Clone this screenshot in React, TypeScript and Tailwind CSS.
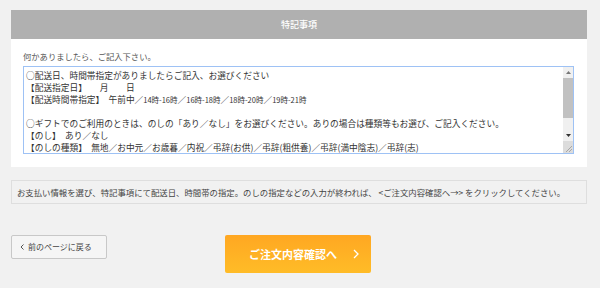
import React from 'react';

const lines: React.ReactNode[] = [
    '○配送日、時間帯指定がありましたらご記入、お選びください',
    '【配送指定日】　　月　　日',
    <>
        【配送時間帯指定】　午前中／<span className="text-[7.5px]">14時-16時</span>／<span className="text-[7.5px]">16時-18時</span>／<span className="text-[7.5px]">18時-20時</span>／<span className="text-[7.5px]">19時-21時</span>
    </>,
    '',
    '○ギフトでのご利用のときは、のしの「あり／なし」をお選びください。ありの場合は種類等もお選び、ご記入ください。',
    '【のし】　あり／なし',
    '【のしの種類】　無地／お中元／お歳暮／内祝／弔辞(お供)／弔辞(粗供養)／弔辞(満中陰志)／弔辞(志)',
    '【名入れ】　ありの場合は名前をご記入ください。【　　　　　】',
];

const font = { fontFamily: '"Noto Sans CJK JP", "Noto Sans", sans-serif' };

const App: React.FC = () => {
    return (
        <div className="w-[600px] h-[288px] bg-[#f1f1f1] pt-[10px] pl-[11px] pr-[13px] text-[#444]" style={font}>
            {/* 特記事項 panel */}
            <div className="bg-white">
                <div className="h-[29px] bg-[#b0b0b0] flex items-center justify-center text-white text-[9px] font-medium">
                    特記事項
                </div>
                <div className="pt-[10px] pb-[13px] pl-[12px] pr-[13px]">
                    <p className="text-[8.3px] leading-[14px] mb-[3px] text-[#555]">何かありましたら、ご記入下さい。</p>
                    <div className="h-[88px] border border-[#9ec2f5] flex overflow-hidden">
                        <div className="flex-1 pl-[2px] pt-[3px] text-[8.7px] leading-[12px] text-[#333] overflow-hidden whitespace-nowrap">
                            {lines.map((line, i) => (
                                <div key={i} className="h-[12px]">{line}</div>
                            ))}
                        </div>
                        <div className="w-[10px] bg-[#f0f0f0] flex flex-col">
                            <div className="h-[11px] flex items-center justify-center text-[#777]">
                                <svg width="5" height="3" viewBox="0 0 5 3"><path d="M0 3 L2.5 0 L5 3 Z" fill="currentColor" /></svg>
                            </div>
                            <div className="h-[40px] bg-[#c1c1c1]" />
                            <div className="flex-1" />
                            <div className="h-[11px] flex items-center justify-center text-[#333]">
                                <svg width="5" height="3" viewBox="0 0 5 3"><path d="M0 0 L5 0 L2.5 3 Z" fill="currentColor" /></svg>
                            </div>
                            <div className="h-[12px] bg-[#dcdcdc] flex items-end justify-end p-[1px]">
                                <svg width="7" height="7" viewBox="0 0 7 7">
                                    <path d="M7 1 L1 7 M7 4 L4 7" stroke="#999" strokeWidth="0.8" />
                                </svg>
                            </div>
                        </div>
                    </div>
                </div>
            </div>

            {/* info */}
            <div className="mt-[13px] h-[24px] border border-[#dedede] flex items-center pl-[5px] text-[8.4px] text-[#444]">
                お支払い情報を選び、特記事項にて配送日、時間帯の指定。のしの指定などの入力が終われば、 &lt;ご注文内容確認へ→&gt; をクリックしてください。
            </div>

            {/* buttons */}
            <div className="mt-[31px] flex items-start">
                <button className="w-[96px] h-[24px] bg-[#f5f5f5] border border-[#c8c8c8] rounded-[2px] flex items-center pl-[8px] gap-[4px] text-[8px] text-[#444]">
                    <svg width="4" height="6" viewBox="0 0 4 6"><path d="M3.5 0.5 L1 3 L3.5 5.5" stroke="#555" strokeWidth="1" fill="none" /></svg>
                    <span>前のページに戻る</span>
                </button>
                <button className="ml-[118px] w-[146px] h-[38px] rounded-[2px] bg-gradient-to-b from-[#ffa722] to-[#ffbc27] flex items-center justify-center pl-[12px] gap-[16px] text-white text-[11px] font-bold">
                    <span>ご注文内容確認へ</span>
                    <svg width="6" height="10" viewBox="0 0 6 10"><path d="M1 1 L5 5 L1 9" stroke="white" strokeWidth="1.3" fill="none" /></svg>
                </button>
            </div>
        </div>
    );
};

export default App;
